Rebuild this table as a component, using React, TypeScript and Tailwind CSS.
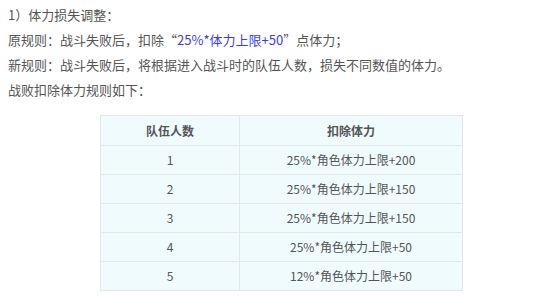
import React from "react";

const rows = [
  ["1", "25%*角色体力上限+200"],
  ["2", "25%*角色体力上限+150"],
  ["3", "25%*角色体力上限+150"],
  ["4", "25%*角色体力上限+50"],
  ["5", "12%*角色体力上限+50"],
];

const App: React.FC = () => {
  return (
    <div className="w-[540px] h-[296px] bg-white overflow-hidden font-['Noto_Sans_CJK_SC',sans-serif] text-[#555]">
      <div className="pl-2 pt-[2px] text-[13px] leading-[25px]">
        <p>1）体力损失调整：</p>
        <p>
          原规则：战斗失败后，扣除“
          <span className="text-[#3b3bf5]">25%*体力上限+50</span>”点体力；
        </p>
        <p>新规则：战斗失败后，将根据进入战斗时的队伍人数，损失不同数值的体力。</p>
        <p>战败扣除体力规则如下：</p>
      </div>
      <div className="mt-[13px] ml-[100px]">
        <table className="w-[363px] border-collapse bg-[#effbfd] text-[12px]">
          <thead>
            <tr className="h-[30px]">
              <th className="w-[139px] border border-[#e2e8ea] font-semibold text-center">队伍人数</th>
              <th className="border border-[#e2e8ea] font-semibold text-center">扣除体力</th>
            </tr>
          </thead>
          <tbody>
            {rows.map(([n, v]) => (
              <tr key={n} className="h-[29px]">
                <td className="border border-[#e2e8ea] text-center">{n}</td>
                <td className="border border-[#e2e8ea] text-center">{v}</td>
              </tr>
            ))}
          </tbody>
        </table>
      </div>
    </div>
  );
};

export default App;
